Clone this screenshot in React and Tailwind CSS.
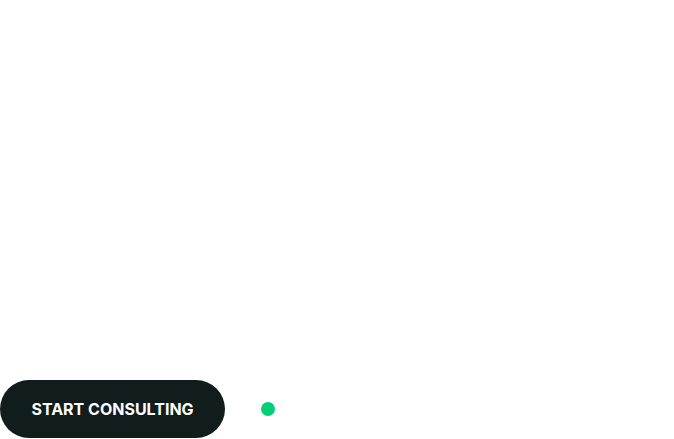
export default function App() {
  return (
    <div className="h-[439px] w-full bg-white flex flex-col justify-end">
      <div className="flex items-center gap-[36px] pb-[1px]">
        <button className="h-[58px] w-[225px] rounded-full bg-[#111c1c] text-white text-[16px] font-bold font-['Inter',sans-serif]">
          START CONSULTING
        </button>
        <span className="w-[14px] h-[14px] rounded-full bg-[#00cf78]" />
      </div>
    </div>
  );
}
